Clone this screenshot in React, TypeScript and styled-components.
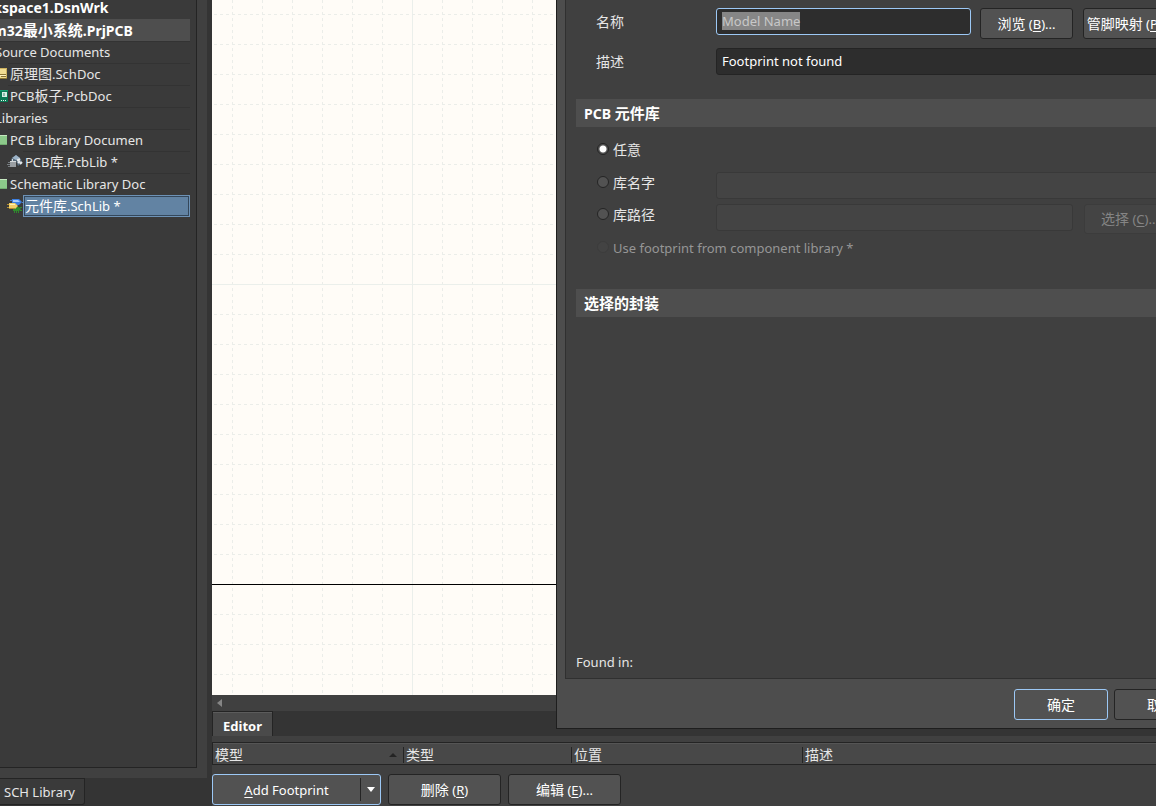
import React, { useEffect, useRef } from "react";
import styled, { createGlobalStyle, css } from "styled-components";

const c = {
  frame: "#404040",
  dark: "#343434",
  panel: "#3a3a3a",
  line: "#242424",
  raised: "#4d4d4d",
  field: "#2d2d2d",
  button: "#525252",
  accent: "#9cc8f5",
  text: "#e6e6e6",
};

const Global = createGlobalStyle`
  *, *::before, *::after { box-sizing: border-box; }
  html, body { margin: 0; background: ${c.dark}; }
  body, button, input {
    font: 13px/20px "Noto Sans", "Noto Sans CJK SC", sans-serif;
    color: ${c.text};
  }
  u { text-underline-offset: 2px; }
`;

const Window = styled.div`
  display: flex;
  height: 100vh;
  overflow: hidden;
`;

/* CJK glyphs are set one size larger than the Latin text beside them */
const Cjk = styled.span<{ $bold?: boolean }>`
  font-size: ${(p) => (p.$bold ? 15 : 14)}px;
`;

/* ---------- Projects panel ---------- */

const Side = styled.aside`
  display: flex;
  flex-direction: column;
  flex: none;
  width: 207px;
`;

const SideFrame = styled.div`
  flex: 1;
  min-height: 0;
  padding: 0 10px 10px 0;
  background: ${c.frame};
`;

const TreeBox = styled.div`
  height: 100%;
  overflow: hidden;
  background: ${c.panel};
  border: solid ${c.line};
  border-width: 0 1px 1px 0;
`;

const Tree = styled.ul`
  list-style: none;
  margin: -3px 6px 0 -53px;
  padding: 0;
`;

const TreeRow = styled.li<{ $level: number; $current?: boolean }>`
  display: flex;
  align-items: center;
  height: 22px;
  padding-left: ${(p) => p.$level * 15}px;
  white-space: nowrap;
  ${(p) =>
    p.$current &&
    css`
      background: #4e4e4e;
    `}
`;

const IconSlot = styled.span`
  flex: none;
  width: 16px;
  height: 16px;
  svg {
    display: block;
  }
`;

const TreeLabel = styled.span<{ $bold?: boolean; $selected?: boolean }>`
  flex: 1;
  height: 22px;
  padding-left: 2px;
  border-top: 1px solid #333;
  overflow: hidden;
  ${(p) =>
    p.$bold &&
    css`
      font-size: 14px;
      font-weight: 700;
      color: #fff;
      border-top-color: transparent;
    `}
  ${(p) =>
    p.$selected &&
    css`
      padding-left: 1px;
      line-height: 20px;
      color: #fff;
      background: #6283a3;
      border: 1px solid #6d92b6;
      box-shadow: inset 0 0 0 1px #34475a;
    `}
`;

const PanelTab = styled.button`
  align-self: flex-start;
  height: 27px;
  margin-bottom: 1px;
  padding: 0 9px 0 4px;
  background: ${c.panel};
  border: 1px solid ${c.line};
  border-left: 0;
  border-radius: 0 0 3px 0;
`;

/* ---------- Main area ---------- */

const Main = styled.main`
  position: relative;
  display: flex;
  flex-direction: column;
  flex: 1;
  min-width: 0;
  padding-left: 5px;
  overflow: hidden;
`;

const Sheet = styled.div`
  flex: 1;
  min-height: 0;
  background: #fffcf7;
  svg {
    display: block;
  }
`;

const ScrollBar = styled.div`
  display: flex;
  align-items: center;
  height: 16px;
  padding-left: 5px;
  background: ${c.frame};
`;

const EditorTabs = styled.div`
  display: flex;
  height: 25px;
`;

const EditorTab = styled.button`
  padding: 4px 10px 0;
  color: #fff;
  font-weight: 700;
  background: #4a4a4a;
  border: solid ${c.line};
  border-width: 1px 1px 0;
  box-shadow: inset 0 1px #5c5c5c;
`;

const EditorPane = styled.section`
  padding: 6px 0 1px;
  background: ${c.frame};
`;

const ModelTable = styled.table`
  width: 100%;
  table-layout: fixed;
  border-spacing: 0;
  background: #484848;
  border: solid ${c.line};
  border-width: 1px 0 1px 1px;
  box-shadow: inset 0 1px #555;
`;

const Th = styled.th<{ $width?: number }>`
  width: ${(p) => (p.$width ? `${p.$width}px` : "auto")};
  height: 21px;
  padding: 2px 0 0;
  font-weight: 400;
  font-size: 14px;
  text-align: left;
`;

const ThInner = styled.div<{ $divided?: boolean }>`
  display: flex;
  align-items: center;
  justify-content: space-between;
  height: 16px;
  padding: 0 6px 0 2px;
  border-left: ${(p) => (p.$divided ? `1px solid ${c.line}` : "0")};
`;

const ButtonBar = styled.div`
  display: flex;
  gap: 7px;
  padding-top: 9px;
`;

const Button = styled.button<{ $width: number; $primary?: boolean }>`
  flex: none;
  width: ${(p) => p.$width}px;
  height: 31px;
  padding: 0;
  color: #fff;
  white-space: nowrap;
  background: ${c.button};
  border: 1px solid ${(p) => (p.$primary ? c.accent : c.line)};
  border-radius: 3px;
  &:disabled {
    height: 30px;
    color: #858585;
    background: #444;
    border-color: #3c3c3c;
  }
`;

const Split = styled.div`
  display: flex;
  width: 169px;
  height: 31px;
  background: ${c.button};
  border: 1px solid ${c.accent};
  border-radius: 3px;
`;

const SplitButton = styled.button<{ $arrow?: boolean }>`
  display: flex;
  align-items: center;
  justify-content: center;
  flex: ${(p) => (p.$arrow ? "0 0 20px" : "1")};
  margin: ${(p) => (p.$arrow ? "3px 0 3px" : "0")};
  padding: 0;
  color: #fff;
  white-space: pre;
  background: none;
  border: 0;
  border-left: ${(p) => (p.$arrow ? `1px solid ${c.line}` : "0")};
`;

/* ---------- PCB model dialog ---------- */

const Dialog = styled.div`
  position: absolute;
  top: 0;
  bottom: 77px;
  left: 349px;
  right: -62px;
  display: flex;
  flex-direction: column;
  background: ${c.raised};
  border: solid #1e1e1e;
  border-width: 0 1px 1px;
`;

const DialogBody = styled.form`
  display: flex;
  flex-direction: column;
  flex: 1;
  min-height: 0;
  margin: 0 8px;
  padding: 8px 10px 6px;
  background: ${c.frame};
  border: solid #303030;
  border-width: 0 1px 1px;
`;

const Fields = styled.div<{ $compact?: boolean }>`
  display: flex;
  flex-direction: column;
  gap: ${(p) => (p.$compact ? 5 : 9)}px;
  padding: 0 22px 0 20px;
`;

const FieldRow = styled.div<{ $tight?: boolean }>`
  display: flex;
  align-items: flex-start;
  height: ${(p) => (p.$tight ? "28px" : "auto")};
`;

const FieldLabel = styled.label`
  flex: none;
  width: 120px;
  padding-top: 4px;
  font-size: 14px;
`;

const Radio = styled.label<{ $disabled?: boolean }>`
  display: flex;
  align-items: center;
  gap: 4px;
  flex: none;
  min-width: 120px;
  height: 22px;
  font-size: ${(p) => (p.$disabled ? 13 : 14)}px;
  color: ${(p) => (p.$disabled ? "#969696" : c.text)};
  input {
    appearance: none;
    width: 12px;
    height: 12px;
    margin: 0 0 2px 1px;
    border: 1px solid ${c.line};
    border-radius: 50%;
    background: ${c.button};
  }
  input:checked {
    background: radial-gradient(circle, #fff 0 3px, ${c.button} 4px);
  }
  input:disabled {
    background: #434343;
    border-color: #3c3c3c;
  }
`;

const TextBox = styled.input`
  flex: 1;
  min-width: 0;
  height: 27px;
  padding: 0 5px 2px;
  color: #fff;
  background: ${c.field};
  border: 1px solid ${c.line};
  border-radius: 3px;
  outline: 0;
  &:disabled {
    background: #444;
    border-color: #393939;
  }
`;

const NameBox = styled(TextBox)`
  margin-right: 9px;
  color: #c8c8c8;
  border-color: ${c.accent};
  &::selection {
    color: #c8c8c8;
    background: #868686;
  }
`;

const PathBox = styled(TextBox)`
  margin-right: 11px;
`;

const RowButton = styled(Button)`
  & + & {
    margin-left: 10px;
  }
`;

const SectionTitle = styled.h2`
  flex: none;
  height: 28px;
  margin: 0;
  padding: 4px 8px;
  font: inherit;
  font-size: 14px;
  line-height: 20px;
  font-weight: 700;
  color: #fff;
  background: #4e4e4e;
`;

const RadioArea = styled.div`
  padding: 12px 0 30px;
`;

const Spacer = styled.div<{ $height?: number }>`
  flex: ${(p) => (p.$height ? `0 0 ${p.$height}px` : "1")};
`;

const FoundIn = styled.p`
  margin: 0;
`;

const DialogFooter = styled.div`
  display: flex;
  justify-content: flex-end;
  gap: 6px;
  padding: 10px 9px 8px;
`;

/* ---------- Icons ---------- */

const FolderIcon = () => (
  <svg width="16" height="16" aria-hidden="true">
    <rect x="1" y="3" width="14" height="10" fill="#8cc98a" />
    <rect x="1" y="3" width="14" height="1" fill="#c5e8c0" />
    <rect x="1" y="12" width="14" height="1" fill="#72ad70" />
  </svg>
);

const SchDocIcon = () => (
  <svg width="16" height="16" aria-hidden="true">
    <rect x="1" y="2" width="14" height="11" fill="#f0dc92" />
    <path d="M1 2.5H15M14.5 2V13" stroke="#cdb25f" fill="none" />
    <path d="M8 8.5H14M9 10.5H14M1 12.5H15" stroke="#8c7636" fill="none" />
    <path d="M8 9.5H14" stroke="#fff3c4" fill="none" />
  </svg>
);

const PcbDocIcon = () => (
  <svg width="16" height="16" aria-hidden="true">
    <rect x="1" y="2" width="15" height="12" fill="#0b7a55" />
    <rect x="10" y="4" width="5" height="5" fill="#d8efe6" />
    <rect x="11" y="5" width="2" height="3" fill="#8eb9ab" />
    <path d="M3 12.5H15" stroke="#e8f5ef" strokeDasharray="1 1" fill="none" />
    <path d="M1 2.5H16" stroke="#159a6e" fill="none" />
  </svg>
);

const PcbLibIcon = () => (
  <svg width="16" height="16" aria-hidden="true">
    <path d="M4 5L9 1L14 5L15 9L11 12L9 7H4Z" fill="#56697a" />
    <path d="M5 4L9 1L13 4L9 6Z" fill="#9db4c8" />
    <path d="M10 6.5L13 5M11 9L13 7M13 10L15 8" stroke="#e4e8eb" strokeWidth="2" />
    <rect x="3" y="7" width="6" height="6" fill="#9a9fa3" />
    <path d="M3 7.5H9M5.5 5V7" stroke="#d4d8da" />
    <path d="M1 8.5H3M0 10.5H3M1 12.5H3" stroke="#777d82" />
  </svg>
);

const SchLibIcon = () => (
  <svg width="16" height="16" aria-hidden="true">
    <path d="M5 1H12L15 4L12 7H5Z" fill="#3c7fe0" />
    <path d="M6 2H11L13 4H6Z" fill="#a3cbff" />
    <path d="M3 2.5H5M15 4.5H16" stroke="#4a7ecb" />
    <path d="M6 9H12L14 11L12 13H6Z" fill="#2f8a2c" />
    <path d="M7.5 13V15M9.5 13V15M11.5 13V15M13 9.5H15M13 12.5H15" stroke="#2f8a2c" />
    <path d="M2 5H8L11 8L8 11H2Z" fill="#f1cf69" />
    <path d="M3 6.5H8" stroke="#fff0b5" />
    <path d="M0 6.5H2M0 9.5H2M2 10.5H8" stroke="#b38f31" />
  </svg>
);

/* Schematic sheet grid: 30px minor cells, a solid line every tenth cell */
const SheetGrid = () => {
  const minor = Array.from({ length: 60 }, (_, i) => i);
  return (
    <svg width="100%" height="100%" aria-hidden="true" shapeRendering="crispEdges">
      {minor.map((i) => {
        const major = (i - 6) % 10 === 0;
        const x = 20 + i * 30;
        return (
          <rect
            key={`v${i}`}
            x={x}
            y="0"
            width="1"
            height="100%"
            fill={major ? "#ebefeb" : "url(#dashV)"}
          />
        );
      })}
      {minor.map((i) => {
        const major = i % 10 === 9;
        const y = 14 + i * 30;
        return (
          <rect
            key={`h${i}`}
            x="0"
            y={y}
            width="100%"
            height="1"
            fill={i === 19 ? "#000" : major ? "#ebefeb" : "url(#dashH)"}
          />
        );
      })}
      <defs>
        <pattern id="dashV" width="1" height="6" patternUnits="userSpaceOnUse">
          <rect width="1" height="3" fill="#ebede9" />
        </pattern>
        <pattern id="dashH" x="2" width="6" height="1" patternUnits="userSpaceOnUse">
          <rect width="3" height="1" fill="#ebede9" />
        </pattern>
      </defs>
    </svg>
  );
};

/* ---------- Data ---------- */

type Node = {
  level: number;
  prefix?: string;
  cjk?: string;
  text: string;
  icon?: React.ReactNode;
  bold?: boolean;
  current?: boolean;
  selected?: boolean;
};

const nodes: Node[] = [
  { level: 0, text: "Workspace1.DsnWrk", bold: true },
  { level: 1, prefix: "stm32", cjk: "最小系统", text: ".PrjPCB", bold: true, current: true },
  { level: 2, text: "Source Documents" },
  { level: 3, cjk: "原理图", text: ".SchDoc", icon: <SchDocIcon /> },
  { level: 3, prefix: "PCB", cjk: "板子", text: ".PcbDoc", icon: <PcbDocIcon /> },
  { level: 2, text: "Libraries" },
  { level: 3, text: "PCB Library Documen", icon: <FolderIcon /> },
  { level: 4, prefix: "PCB", cjk: "库", text: ".PcbLib *", icon: <PcbLibIcon /> },
  { level: 3, text: "Schematic Library Doc", icon: <FolderIcon /> },
  { level: 4, cjk: "元件库", text: ".SchLib *", icon: <SchLibIcon />, selected: true },
];

export default function App() {
  const nameRef = useRef<HTMLInputElement>(null);
  useEffect(() => {
    nameRef.current?.focus();
    nameRef.current?.select();
  }, []);

  return (
    <Window>
      <Global />
      <Side>
        <SideFrame>
          <TreeBox>
            <Tree>
              {nodes.map((n) => (
                <TreeRow key={n.level + n.text} $level={n.level} $current={n.current}>
                  <IconSlot>{n.icon}</IconSlot>
                  <TreeLabel $bold={n.bold} $selected={n.selected}>
                    {n.prefix}
                    {n.cjk && <Cjk $bold={n.bold}>{n.cjk}</Cjk>}
                    {n.text}
                  </TreeLabel>
                </TreeRow>
              ))}
            </Tree>
          </TreeBox>
        </SideFrame>
        <PanelTab type="button">SCH Library</PanelTab>
      </Side>

      <Main>
        <Sheet>
          <SheetGrid />
        </Sheet>
        <ScrollBar>
          <svg width="6" height="8" aria-hidden="true">
            <path d="M0 4L5 0V8Z" fill="#858585" />
          </svg>
        </ScrollBar>
        <EditorTabs>
          <EditorTab type="button">Editor</EditorTab>
        </EditorTabs>
        <EditorPane>
          <ModelTable>
            <thead>
              <tr>
                <Th $width={190}>
                  <ThInner>
                    模型
                    <svg width="8" height="4" aria-hidden="true">
                      <path d="M0 4L4 0L8 4Z" fill="#242424" />
                    </svg>
                  </ThInner>
                </Th>
                <Th $width={168}>
                  <ThInner $divided>类型</ThInner>
                </Th>
                <Th $width={231}>
                  <ThInner $divided>位置</ThInner>
                </Th>
                <Th>
                  <ThInner $divided>描述</ThInner>
                </Th>
              </tr>
            </thead>
          </ModelTable>
          <ButtonBar>
            <Split>
              <SplitButton type="button">
                <u>A</u>dd Footprint
              </SplitButton>
              <SplitButton type="button" $arrow aria-label="More model types">
                <svg width="8" height="5" aria-hidden="true">
                  <path d="M0 0H8L4 5Z" fill="#fff" />
                </svg>
              </SplitButton>
            </Split>
            <Button type="button" $width={113}>
              <Cjk>删除</Cjk> (<u>R</u>)
            </Button>
            <Button type="button" $width={113}>
              <Cjk>编辑</Cjk> (<u>E</u>)...
            </Button>
          </ButtonBar>
        </EditorPane>

        <Dialog role="dialog">
          <DialogBody>
            <Fields>
              <FieldRow>
                <FieldLabel htmlFor="model-name">名称</FieldLabel>
                <NameBox id="model-name" ref={nameRef} defaultValue="Model Name" />
                <RowButton type="button" $width={93}>
                  <Cjk>浏览</Cjk> (<u>B</u>)...
                </RowButton>
                <RowButton type="button" $width={93}>
                  <Cjk>管脚映射</Cjk> (<u>P</u>)...
                </RowButton>
              </FieldRow>
              <FieldRow>
                <FieldLabel htmlFor="model-desc">描述</FieldLabel>
                <TextBox id="model-desc" defaultValue="Footprint not found" />
              </FieldRow>
            </Fields>
            <Spacer $height={24} />
            <SectionTitle>
              PCB <Cjk $bold>元件库</Cjk>
            </SectionTitle>
            <RadioArea>
              <Fields $compact>
                <FieldRow>
                  <Radio>
                    <input type="radio" name="library" defaultChecked />
                    任意
                  </Radio>
                </FieldRow>
                <Spacer $height={1} />
                <FieldRow>
                  <Radio>
                    <input type="radio" name="library" />
                    库名字
                  </Radio>
                  <TextBox disabled aria-label="库名字" />
                </FieldRow>
                <FieldRow $tight>
                  <Radio>
                    <input type="radio" name="library" />
                    库路径
                  </Radio>
                  <PathBox disabled aria-label="库路径" />
                  <RowButton type="button" $width={92} disabled>
                    <Cjk>选择</Cjk> (<u>C</u>)...
                  </RowButton>
                </FieldRow>
                <FieldRow>
                  <Radio $disabled>
                    <input type="radio" name="library" disabled />
                    Use footprint from component library *
                  </Radio>
                </FieldRow>
              </Fields>
            </RadioArea>
            <SectionTitle>
              <Cjk $bold>选择的封装</Cjk>
            </SectionTitle>
            <Spacer />
            <FoundIn>Found in:</FoundIn>
          </DialogBody>
          <DialogFooter>
            <Button type="button" $width={94} $primary>
              <Cjk>确定</Cjk>
            </Button>
            <Button type="button" $width={94}>
              <Cjk>取消</Cjk>
            </Button>
          </DialogFooter>
        </Dialog>
      </Main>
    </Window>
  );
}
